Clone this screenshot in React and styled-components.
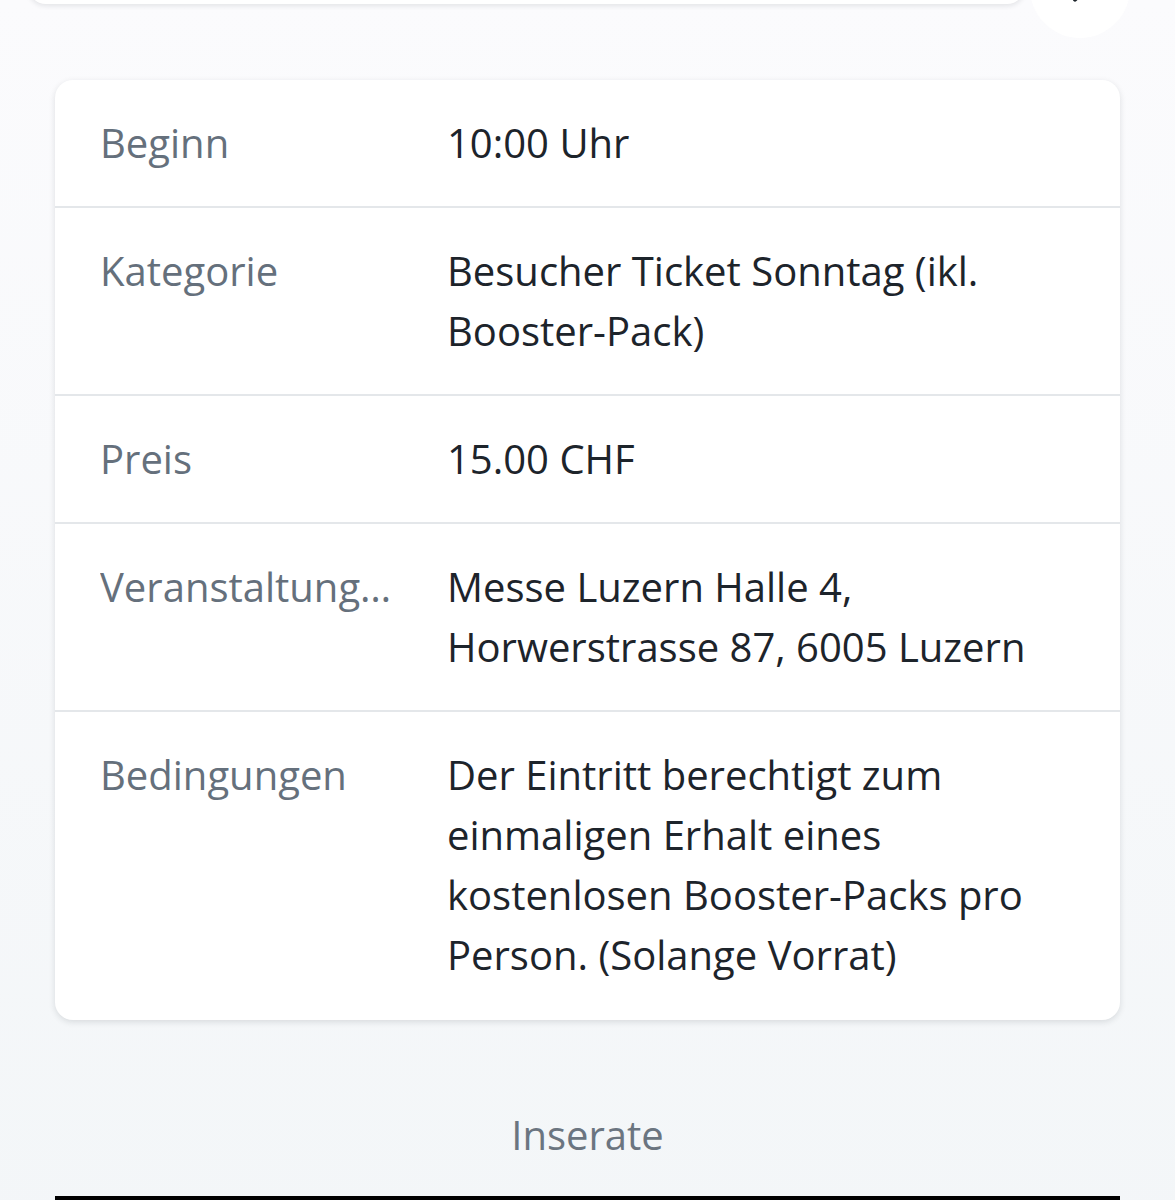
import React from 'react'
import styled, { createGlobalStyle } from 'styled-components'

const GlobalStyle = createGlobalStyle`
  html, body {
    margin: 0;
    padding: 0;
  }
  body {
    font-family: 'Open Sans', 'Noto Sans', sans-serif;
    background: linear-gradient(#fbfbfd, #f3f6f8);
    min-height: 1200px;
    overflow: hidden;
  }
`

const details = [
  { label: 'Beginn', value: '10:00 Uhr' },
  { label: 'Kategorie', value: 'Besucher Ticket Sonntag (ikl. Booster-Pack)' },
  { label: 'Preis', value: '15.00 CHF' },
  { label: 'Veranstaltung…', value: 'Messe Luzern Halle 4, Horwerstrasse 87, 6005 Luzern' },
  {
    label: 'Bedingungen',
    value: 'Der Eintritt berechtigt zum einmaligen Erhalt eines kostenlosen Booster-Packs pro Person. (Solange Vorrat)'
  }
]

export default function App() {
  return (
    <Page>
      <GlobalStyle />
      <Header>
        <TopCard />
        <RoundButton aria-label="Weiter">
          <svg width="40" height="40" viewBox="0 0 24 24" fill="none" stroke="#1d242b" strokeWidth="2.4" strokeLinecap="round" strokeLinejoin="round">
            <path d="M9 5l7 7-7 7" />
          </svg>
        </RoundButton>
      </Header>
      <Card>
        {details.map(item => (
          <Row key={item.label}>
            <Label>{item.label}</Label>
            <Value>{item.value}</Value>
          </Row>
        ))}
      </Card>
      <Footer>
        <FooterLink href="#inserate">Inserate</FooterLink>
      </Footer>
      <BottomBar />
    </Page>
  )
}

const Page = styled.div`
  display: flex;
  flex-direction: column;
  align-items: center;
`

const Header = styled.div`
  display: flex;
  align-items: flex-start;
  gap: 5px;
  width: 100%;
  height: 80px;
  box-sizing: border-box;
  padding: 0 45px 0 28px;
`

const TopCard = styled.div`
  flex: 1;
  height: 64px;
  margin-top: -60px;
  background: #fff;
  border-radius: 18px;
  box-shadow: 0 2px 5px rgba(20, 30, 40, 0.1);
`

const RoundButton = styled.div`
  width: 100px;
  height: 100px;
  margin-top: -62px;
  border-radius: 50%;
  background: #fff;
  display: flex;
  align-items: flex-end;
  justify-content: center;
  padding-bottom: 30px;
  box-sizing: border-box;
`

const Card = styled.div`
  width: 1065px;
  background: #fff;
  border-radius: 18px;
  box-shadow: 0 2px 6px rgba(20, 30, 40, 0.13);
`

const Row = styled.div`
  display: flex;
  gap: 32px;
  padding: 33px 45px;
  border-bottom: 2px solid #e4e7ea;
  line-height: 60px;
  font-size: 40px;

  &:last-child {
    border-bottom: none;
    padding-bottom: 35px;
  }
`

const Label = styled.div`
  flex: 0 0 315px;
  color: #65707c;
  white-space: nowrap;
  overflow: hidden;
  text-overflow: ellipsis;
`

const Value = styled.div`
  flex: 1;
  color: #1d242b;
`

const Footer = styled.div`
  padding: 85px 0 31px;
  text-align: center;
  line-height: 60px;
  font-size: 40px;
`

const FooterLink = styled.a`
  color: #6b7580;
  text-decoration: none;
`

const BottomBar = styled.div`
  width: 1065px;
  height: 40px;
  background: #000;
`
